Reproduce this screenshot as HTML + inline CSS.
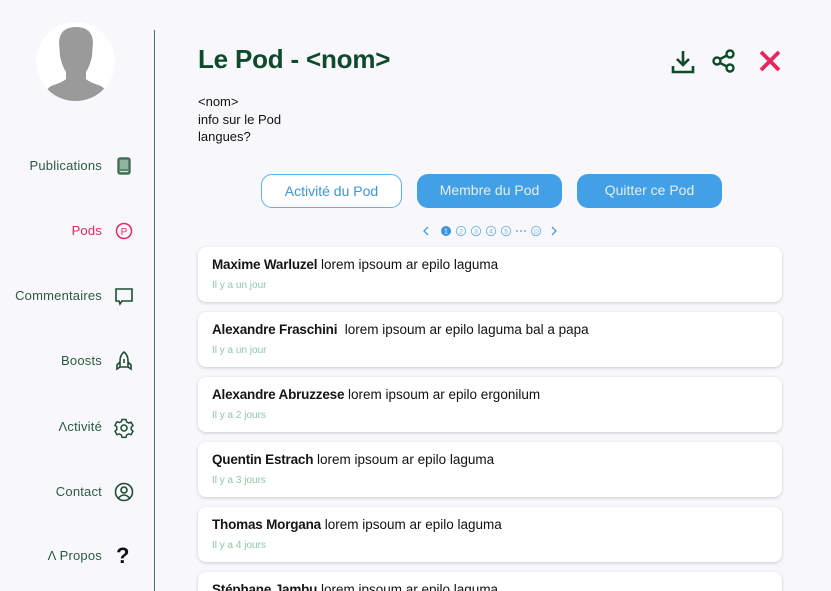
<!DOCTYPE html>
<html style="width:831px;height:591px;overflow:hidden"><head><meta charset="utf-8"><style>
*{margin:0;padding:0;box-sizing:border-box}
body{width:831px;height:591px;overflow:hidden;background:#f7f7fc;font-family:"Liberation Sans",sans-serif;position:relative}
.abs{position:absolute}
.line{left:154px;top:30px;width:1px;height:561px;background:#3f7a5a}
.av{left:36px;top:22px;width:79px;height:79px;border-radius:50%;background:#fff;overflow:hidden}
.nav{right:729px;font-size:13px;color:#2d5a3f;text-align:right;white-space:nowrap;letter-spacing:0.2px}
.ic{left:113px;width:22px;height:22px}
h1{left:198px;top:44px;font-size:26px;font-weight:bold;color:#0f4a2a;letter-spacing:-0.2px}
.info{left:198px;top:93px;font-size:13px;line-height:17.5px;color:#111}
.btn{top:174px;height:34px;border-radius:11px;font-size:14px;text-align:center;line-height:33px}
.card{left:198px;width:584px;height:55px;background:#fff;border-radius:8px;box-shadow:0 1px 3px rgba(0,0,0,0.18);overflow:hidden}
.card .n{position:absolute;left:14px;top:10px;font-size:13.5px;color:#111;white-space:nowrap}
.card .n b{font-weight:bold;color:#151515;letter-spacing:-0.2px}
.card .t{position:absolute;left:14px;top:33px;font-size:10px;color:#8ccba3}
</style></head><body>
<div class="abs line"></div>
<div class="abs av"><svg width="79" height="79" viewBox="0 0 79 79"><path d="M23 20 Q24 5 40 5 Q56 5 57 20 L56 34 Q54 44 50 50 L50 57 Q53 60 65 64 Q70 67 72 75 L72 79 L8 79 L8 75 Q10 67 15 64 Q27 60 30 57 L30 50 Q26 44 24 34 Z" fill="#9a9a9a"/></svg></div>

<div class="abs nav" style="top:158px">Publications</div>
<svg class="abs ic" style="top:155px" viewBox="0 0 22 22"><rect x="5" y="3" width="12" height="16" rx="2" fill="#5b8a6e" stroke="#2d5a3f" stroke-width="1.2"/><rect x="7" y="5" width="8" height="9" fill="#8fb39c"/><line x1="7" y1="16.5" x2="15" y2="16.5" stroke="#cfe0d5"/></svg>
<div class="abs nav" style="top:223px;color:#e8275f">Pods</div>
<svg class="abs ic" style="top:220px" viewBox="0 0 22 22"><circle cx="11" cy="11" r="7.5" fill="none" stroke="#e8275f" stroke-width="1.5"/><text x="11" y="15" font-size="10" text-anchor="middle" fill="#e8275f" font-family="Liberation Sans">P</text></svg>
<div class="abs nav" style="top:288px">Commentaires</div>
<svg class="abs ic" style="top:285px" viewBox="0 0 22 22"><path d="M3 4 H19 V16 H9 L7 19 L6 16 H3 Z" fill="none" stroke="#1f4d33" stroke-width="1.6"/></svg>
<div class="abs nav" style="top:353px">Boosts</div>
<svg class="abs ic" style="top:350px" viewBox="0 0 22 22"><path d="M11 2 Q15 5 15 11 L15 17 L7 17 L7 11 Q7 5 11 2 Z M7 12 L4 15 L4 19 L7 17 M15 12 L18 15 L18 19 L15 17 M11 9 V13" fill="none" stroke="#1f4d33" stroke-width="1.6"/></svg>
<div class="abs nav" style="top:419px">Λctivité</div>
<svg class="abs ic" style="top:417px" viewBox="0 0 22 22"><path d="M9 2.5h4l.6 2.4 2 1.1 2.4-.8 2 3.4-1.8 1.7v2.3l1.8 1.7-2 3.4-2.4-.8-2 1.1-.6 2.4H9l-.6-2.4-2-1.1-2.4.8-2-3.4 1.8-1.7V9.9L2 8.2l2-3.4 2.4.8 2-1.1z" fill="none" stroke="#1f4d33" stroke-width="1.5"/><circle cx="11" cy="11" r="3" fill="none" stroke="#1f4d33" stroke-width="1.5"/></svg>
<div class="abs nav" style="top:484px">Contact</div>
<svg class="abs ic" style="top:481px" viewBox="0 0 22 22"><circle cx="11" cy="11" r="8.5" fill="none" stroke="#1f4d33" stroke-width="1.6"/><circle cx="11" cy="9" r="3" fill="none" stroke="#1f4d33" stroke-width="1.6"/><path d="M5.5 17 Q11 11 16.5 17" fill="none" stroke="#1f4d33" stroke-width="1.6"/></svg>
<div class="abs nav" style="top:548px">Λ Propos</div>
<div class="abs" style="left:116px;top:543px;font-size:22px;font-weight:bold;color:#111">?</div>

<h1 class="abs">Le Pod - &lt;nom&gt;</h1>
<svg class="abs" style="left:670px;top:48px" width="26" height="26" viewBox="0 0 26 26"><path d="M13 3 V17 M7 11 L13 17 L19 11 M3 18 V24 H23 V18" fill="none" stroke="#0f4a2a" stroke-width="2.6"/></svg>
<svg class="abs" style="left:711px;top:48px" width="26" height="26" viewBox="0 0 26 26"><circle cx="19" cy="6" r="3.5" fill="none" stroke="#0f4a2a" stroke-width="2.4"/><circle cx="6" cy="13" r="3.5" fill="none" stroke="#0f4a2a" stroke-width="2.4"/><circle cx="19" cy="20" r="3.5" fill="none" stroke="#0f4a2a" stroke-width="2.4"/><path d="M9 11 L16 7.5 M9 15 L16 18.5" stroke="#0f4a2a" stroke-width="2.4"/></svg>
<svg class="abs" style="left:757px;top:48px" width="26" height="26" viewBox="0 0 26 26"><path d="M4 4 L22 22 M22 4 L4 22" stroke="#e8275f" stroke-width="3.8"/></svg>

<div class="abs info">&lt;nom&gt;<br>info sur le Pod<br>langues?</div>

<div class="abs btn" style="left:261px;width:141px;background:#fff;border:1.5px solid #5fb0ec;color:#3a95de">Activité du Pod</div>
<div class="abs btn" style="left:417px;width:145px;background:#42a0e6;color:#e6eef7">Membre du Pod</div>
<div class="abs btn" style="left:577px;width:145px;background:#42a0e6;color:#e6eef7">Quitter ce Pod</div>

<svg class="abs" style="left:418px;top:224px" width="145" height="14" viewBox="418 224 145 14">
<path d="M428 227 L424 231 L428 235 M552 227 L556 231 L552 235" fill="none" stroke="#4a9fe0" stroke-width="1.3"/>
<circle cx="446" cy="231" r="5" fill="#3a95de"/><text x="446" y="233.5" font-size="7" fill="#fff" text-anchor="middle" font-family="Liberation Sans">1</text>
<g fill="none" stroke="#6fb3e8" stroke-width="0.9"><circle cx="461" cy="231" r="4.7"/><circle cx="476" cy="231" r="4.7"/><circle cx="491" cy="231" r="4.7"/><circle cx="506" cy="231" r="4.7"/><circle cx="536" cy="231" r="4.7"/></g>
<g font-size="6.5" fill="#6fb3e8" text-anchor="middle" font-family="Liberation Sans"><text x="461" y="233.3">2</text><text x="476" y="233.3">3</text><text x="491" y="233.3">4</text><text x="506" y="233.3">5</text><text x="536" y="233.3" font-size="5.5">12</text></g>
<g fill="#6fb3e8"><circle cx="517" cy="231" r="1"/><circle cx="521" cy="231" r="1"/><circle cx="525" cy="231" r="1"/></g>
</svg>

<div class="abs card" style="top:247px"><div class="n"><b>Maxime Warluzel</b> lorem ipsoum ar epilo laguma</div><div class="t">Il y a un jour</div></div>
<div class="abs card" style="top:312px"><div class="n"><b>Alexandre Fraschini</b>&nbsp; lorem ipsoum ar epilo laguma bal a papa</div><div class="t">Il y a un jour</div></div>
<div class="abs card" style="top:377px"><div class="n"><b>Alexandre Abruzzese</b> lorem ipsoum ar epilo ergonilum</div><div class="t">Il y a 2 jours</div></div>
<div class="abs card" style="top:442px"><div class="n"><b>Quentin Estrach</b> lorem ipsoum ar epilo laguma</div><div class="t">Il y a 3 jours</div></div>
<div class="abs card" style="top:507px"><div class="n"><b>Thomas Morgana</b> lorem ipsoum ar epilo laguma</div><div class="t">Il y a 4 jours</div></div>
<div class="abs card" style="top:572px;height:19px;border-radius:8px 8px 0 0"><div class="n"><b>Stéphane Jambu</b> lorem ipsoum ar epilo laguma</div></div>
</body></html>
